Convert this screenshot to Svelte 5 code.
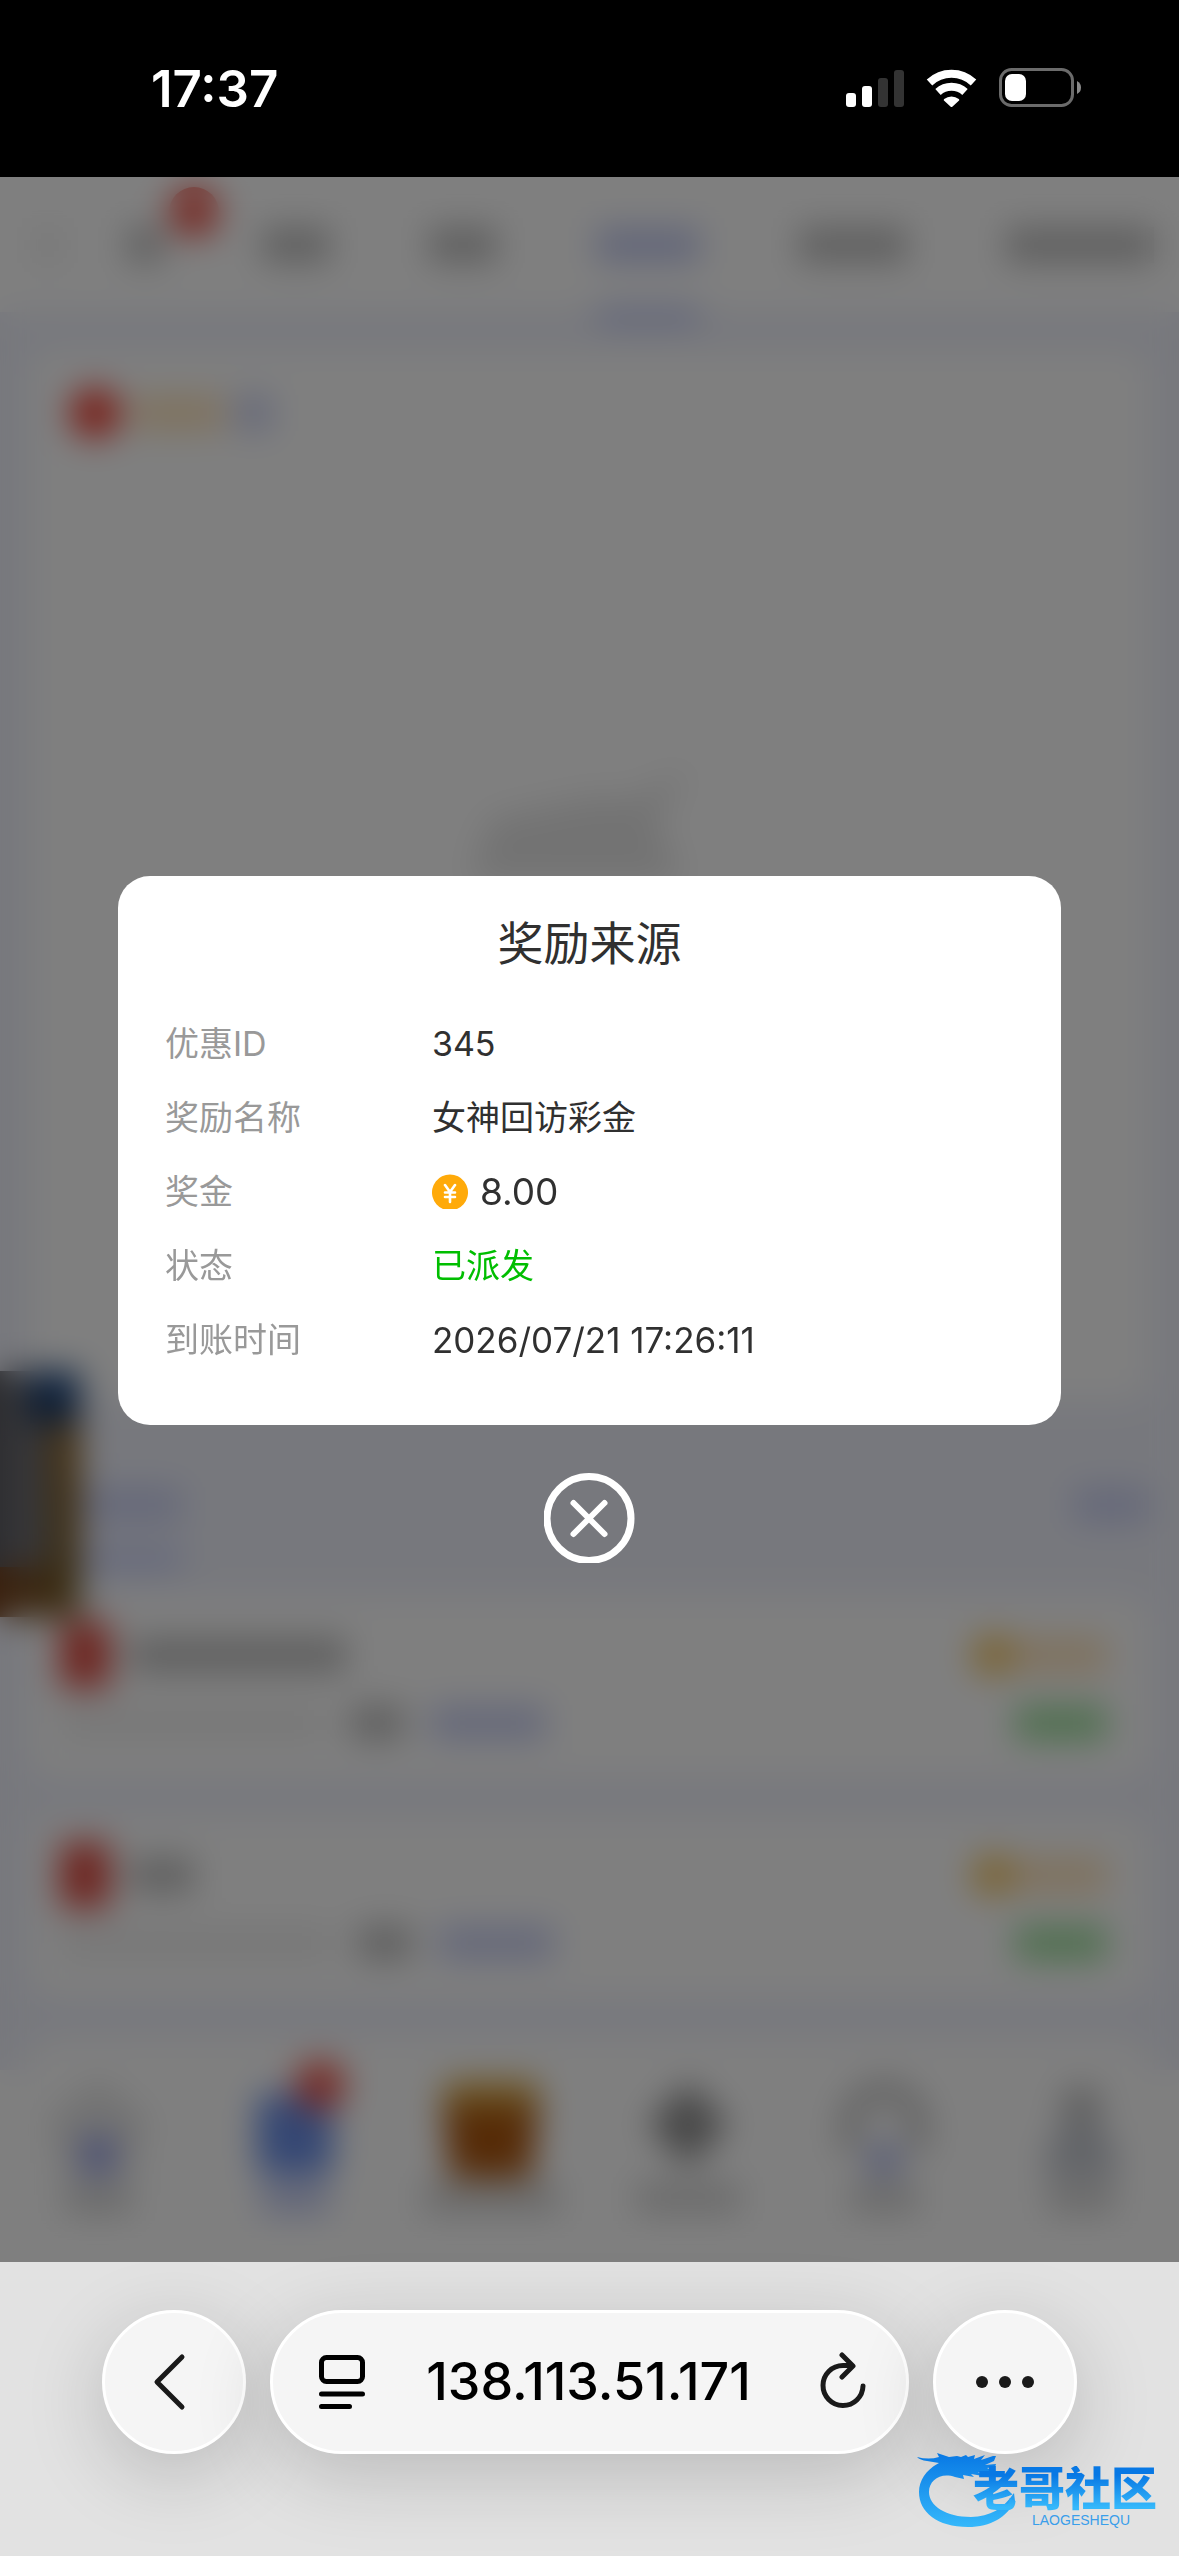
<script lang="ts">
  /**
   * Reward source dialog, shown over the blurred promotions page
   * inside the mobile browser shell.
   */

  interface Detail {
    label: string;
    value: string;
    kind?: 'amount' | 'success' | 'date';
  }

  const details: Detail[] = [
    { label: '优惠ID', value: '345' },
    { label: '奖励名称', value: '女神回访彩金' },
    { label: '奖金', value: '8.00', kind: 'amount' },
    { label: '状态', value: '已派发', kind: 'success' },
    { label: '到账时间', value: '2026/07/21 17:26:11', kind: 'date' }
  ];

  // skeleton widths of the page behind the dialog
  const tabs = [
    { width: 36, badge: true },
    { width: 68 },
    { width: 68 },
    { width: 104, active: true },
    { width: 108 },
    { width: 148 }
  ];

  const records = [
    { title: 216, date: 264 },
    { title: 64, date: 272 }
  ];

  const navItems = [
    { icon: 'home', width: 68 },
    { icon: 'gift', width: 68, active: true, badge: true },
    { icon: 'chest', width: 136 },
    { icon: 'diamond', width: 104 },
    { icon: 'service', width: 68 },
    { icon: 'user', width: 68 }
  ];

  let open = $state(true);
</script>

<div class="phone">
  <header class="status-bar">
    <span class="time">17:37</span>
    <div class="status-icons">
      <svg width="58" height="38" viewBox="0 0 58 38" aria-hidden="true">
        <rect x="0" y="24" width="10" height="14" rx="3" fill="#fff" />
        <rect x="16" y="17" width="10" height="21" rx="3" fill="#fff" />
        <rect x="32" y="9" width="10" height="29" rx="3" fill="#333" />
        <rect x="48" y="1" width="10" height="37" rx="3" fill="#333" />
      </svg>
      <svg width="51" height="38" viewBox="0 0 51 38" fill="none" stroke="#fff" aria-hidden="true">
        <path d="M3.500 13.500a32 32 0 0 1 44 0" stroke-width="8" />
        <path d="M12 23a20 20 0 0 1 27 0" stroke-width="8" />
        <path d="M18.200 30.100a11.500 11.500 0 0 1 14.600 0q.9.800 0 1.700l-6.500 6q-.8.700-1.600 0l-6.500-6q-.9-.9 0-1.700Z" fill="#fff" stroke="none" />
      </svg>
      <svg width="82" height="40" viewBox="0 0 82 40" aria-hidden="true">
        <rect x="1.500" y="1.500" width="72" height="36" rx="11" fill="none" stroke="#6b6b6b" stroke-width="3" />
        <rect x="6" y="6" width="21" height="27" rx="7" fill="#fff" />
        <path d="M78 13v13q4-2 4-6.500t-4-6.500Z" fill="#8a8a8a" />
      </svg>
    </div>
  </header>

  <main class="web">
    <div class="page" aria-hidden={open}>
      <div class="top-tabs">
        <i class="bar faint back"></i>
        {#each tabs as tab}
          <div class="top-tab" class:active={tab.active}>
            <i class="bar" style:width="{tab.width}px"></i>
            {#if tab.badge}<i class="badge"></i>{/if}
          </div>
        {/each}
      </div>

      <div class="content">
        <section class="panel">
          <div class="panel-head">
            <i class="dot"></i>
            <i class="bar gold"></i>
            <i class="bar blue"></i>
          </div>
          <svg class="empty" width="240" height="130" viewBox="0 0 240 130" aria-hidden="true">
            <path d="M20 50 130 28l30 4L220 0l-34 52 26 60H0Z" fill="#e6e6e6" />
          </svg>
        </section>

        <div class="record-tabs">
          <i class="bar blue current"></i>
          <i class="bar blue more"></i>
        </div>

        {#each records as record}
          <article class="record">
            <div class="record-row">
              <i class="packet"></i>
              <i class="bar" style:width="{record.title}px"></i>
              <span class="spacer"></span>
              <i class="coin-dot"></i>
              <i class="bar gold"></i>
            </div>
            <div class="record-row">
              <i class="bar faint" style:width="{record.date}px"></i>
              <i class="bar tag"></i>
              <i class="bar blue source"></i>
              <span class="spacer"></span>
              <i class="bar green"></i>
            </div>
          </article>
        {/each}
        <article class="record"></article>
      </div>

      <div class="nav">
        {#each navItems as item}
          <div class="nav-item">
            <svg width="100" height="108" viewBox="0 0 100 108" aria-hidden="true">
              {#if item.icon === 'home'}
                <path d="M50 16 94 54 84 64v32H16V64L6 54Z" fill="#e8e8e8" stroke="#d8d8d8" stroke-width="8" />
                <rect x="36" y="68" width="28" height="34" fill="#7f8ce8" />
              {:else if item.icon === 'gift'}
                <rect x="12" y="24" width="76" height="80" rx="10" fill="#6a8fe8" />
              {:else if item.icon === 'chest'}
                <rect x="2" y="10" width="96" height="44" rx="8" fill="#d8a846" />
                <path d="M2 36h96l-8 74H10Z" fill="#ac560e" />
              {:else if item.icon === 'diamond'}
                <path d="M50 12 90 54 50 98 10 54Z" fill="#909090" />
              {:else if item.icon === 'service'}
                <path d="M16 82V54a34 34 0 0 1 68 0v28" fill="none" stroke="#bbb" stroke-width="18" />
                <rect x="38" y="76" width="24" height="26" fill="#8a98e8" />
              {:else}
                <circle cx="50" cy="36" r="20" fill="#bcbcbc" />
                <path d="M14 106q0-54 36-54t36 54Z" fill="#c4c8d0" />
              {/if}
            </svg>
            <i class="bar label" class:blue={item.active} style:width="{item.width}px"></i>
            {#if item.badge}<i class="badge"></i>{/if}
          </div>
        {/each}
      </div>

      <div class="floater"></div>
    </div>

    {#if open}
      <div class="overlay">
        <div class="dialog" role="dialog" aria-modal="true" aria-labelledby="dialog-title">
          <h2 id="dialog-title">奖励来源</h2>
          <dl>
            {#each details as detail}
              <div class="detail">
                <dt>{detail.label}</dt>
                <dd class={detail.kind}>
                  {#if detail.kind === 'amount'}
                    <svg width="36" height="36" viewBox="0 0 36 36" aria-hidden="true">
                      <path d="M11 35a18 18 0 1 1 14 0Z" fill="#ffaa0a" />
                      <path
                        d="M13 11l5 7 5-7M18 18v10M13 18.500h10M13 23h10"
                        fill="none"
                        stroke="#fff"
                        stroke-width="2.600"
                        stroke-linecap="round"
                      />
                    </svg>
                  {/if}
                  {detail.value}
                </dd>
              </div>
            {/each}
          </dl>
        </div>
        <button class="close" aria-label="关闭" onclick={() => (open = false)}>
          <svg width="91" height="90" viewBox="0 0 91 90" fill="none" stroke="#fff" aria-hidden="true">
            <circle cx="45" cy="45.500" r="42" stroke-width="7" />
            <path d="M29.500 30 60.500 61M60.500 30 29.500 61" stroke-width="6" stroke-linecap="round" />
          </svg>
        </button>
      </div>
    {/if}
  </main>

  <footer class="browser-bar">
    <button class="glass round" aria-label="返回">
      <svg width="42" height="60" viewBox="0 0 42 60" fill="none" stroke="#1a1a1a" stroke-width="5" stroke-linecap="round" stroke-linejoin="round" aria-hidden="true">
        <path d="M29 5 4 30 29 55" />
      </svg>
    </button>
    <div class="glass address">
      <button class="icon-button" aria-label="页面菜单">
        <svg width="46" height="54" viewBox="0 0 46 54" fill="none" stroke="#000" stroke-width="5" stroke-linecap="round" aria-hidden="true">
          <rect x="2.500" y="2.500" width="41" height="24" rx="5" />
          <path d="M2.500 39h41M2.500 51.500h28" />
        </svg>
      </button>
      <span class="url">138.113.51.171</span>
      <button class="icon-button" aria-label="重新载入">
        <svg width="46" height="60" viewBox="0 0 46 60" fill="none" stroke="#1a1a1a" stroke-width="5" stroke-linecap="round" stroke-linejoin="round" aria-hidden="true">
          <path d="M43 34a20 20 0 1 1-20-20.500h8" />
          <path d="M22 3 33 14 22 25" />
        </svg>
      </button>
    </div>
    <button class="glass round" aria-label="更多">
      <svg width="60" height="14" viewBox="0 0 60 14" fill="#1a1a1a" aria-hidden="true">
        <circle cx="7" cy="7" r="6" />
        <circle cx="30" cy="7" r="6" />
        <circle cx="53" cy="7" r="6" />
      </svg>
    </button>

    <div class="brand">
      <svg width="98" height="78" viewBox="0 0 98 78" aria-hidden="true">
        <defs>
          <linearGradient id="brand-fill" x1="0" y1="0" x2="0" y2="1">
            <stop offset="0" stop-color="#0878e4" />
            <stop offset="1" stop-color="#35b8fb" />
          </linearGradient>
        </defs>
        <path
          fill="url(#brand-fill)"
          d="M0 7q12 3 22 0l-2-4 12 4 8-1 4 1 5-2 2 2 7-2-1 4 11-4-4 5 12-4 3 0-2 5-9 4 11-1-1 3-8 1 6 3-5 2-10-1 5 4-12-2 3 3-11-2 1 4-9-2C24 22 12 30 12 42c0 14 17 25 42 25 19 0 33-9 43-24l1 8c-8 16-24 26-47 26C20 77 2 62 2 42 2 30 10 19 22 13L10 11Q3 10 0 7Z"
        />
      </svg>
      <div class="brand-text">
        <strong>老哥社区</strong>
        <small>LAOGESHEQU</small>
      </div>
    </div>
  </footer>
</div>

<style>
  :global(body) {
    margin: 0;
    background: #000;
  }

  .phone {
    display: flex;
    flex-direction: column;
    height: 100vh;
    font-family: Inter, 'Noto Sans CJK SC', sans-serif;
  }

  button {
    display: flex;
    align-items: center;
    justify-content: center;
    padding: 0;
    border: none;
    background: none;
    cursor: pointer;
  }

  svg {
    display: block;
    flex: none;
  }

  /* Status bar */
  .status-bar {
    display: flex;
    flex: none;
    align-items: center;
    justify-content: space-between;
    box-sizing: border-box;
    height: 177px;
    padding: 0 98px 0 151px;
    background: #000;
    color: #fff;
  }

  .time {
    font-size: 51px;
    font-weight: 600;
    line-height: 60px;
  }

  .status-icons {
    display: flex;
    align-items: center;
    gap: 22px;
    padding-bottom: 2px;
  }

  /* Page behind the dialog */
  .web {
    position: relative;
    flex: 1;
    min-height: 0;
    overflow: hidden;
    background: #eff1fb;
  }

  .page {
    display: flex;
    flex-direction: column;
    height: 100%;
  }

  .bar {
    display: block;
    flex: none;
    height: 36px;
    background: #c0c0c0;
  }

  .bar.faint {
    background: #f0f0f0;
  }

  .bar.blue {
    background: #ccd2f4;
  }

  .bar.gold {
    width: 92px;
    background: #ffe4bc;
  }

  .bar.green {
    width: 92px;
    background: #a0e0a0;
  }

  .badge {
    position: absolute;
    width: 50px;
    height: 50px;
    border-radius: 50%;
    background: #ee5448;
  }

  .top-tabs {
    display: flex;
    flex: none;
    align-items: center;
    gap: 99px;
    height: 135px;
    padding-left: 34px;
    background: #fff;
  }

  .back {
    width: 28px;
    margin-right: -34px;
    background: #dedede;
  }

  .top-tab {
    position: relative;
  }

  .top-tab .badge {
    top: -40px;
    right: -56px;
  }

  .top-tab.active .bar {
    background: #c6cdf2;
  }

  .top-tab.active::after {
    content: '';
    position: absolute;
    top: 82px;
    left: 0;
    width: 100%;
    height: 12px;
    background: #a4b0f0;
  }

  .content {
    display: flex;
    flex: 1;
    flex-direction: column;
    min-height: 0;
    padding: 38px 30px 0;
    overflow: hidden;
  }

  .panel {
    flex: none;
    box-sizing: border-box;
    height: 1050px;
    padding: 38px 40px;
    border-radius: 24px;
    background: #fff;
  }

  .panel-head {
    display: flex;
    align-items: center;
    gap: 12px;
  }

  .panel-head .blue {
    width: 36px;
  }

  .dot {
    width: 50px;
    height: 50px;
    border-radius: 50%;
    background: #f0382a;
  }

  .empty {
    margin: 330px auto 0;
  }

  .record-tabs {
    display: flex;
    flex: none;
    align-items: center;
    justify-content: space-between;
    height: 197px;
  }

  .current {
    position: relative;
    width: 152px;
  }

  .current::after {
    content: '';
    position: absolute;
    top: 66px;
    left: 0;
    width: 100%;
    height: 12px;
    background: #aab6f6;
  }

  .more {
    width: 76px;
  }

  .record-tabs .bar {
    margin-bottom: -12px;
  }

  .record {
    flex: none;
    box-sizing: border-box;
    height: 180px;
    margin-bottom: 40px;
    padding: 24px 42px 0 30px;
    border-radius: 24px;
    background: #fff;
  }

  .record-row {
    display: flex;
    align-items: center;
    height: 68px;
  }

  .record-row .tag {
    width: 54px;
    margin: 0 26px;
  }

  .record-row .source {
    width: 116px;
  }

  .spacer {
    flex: 1;
  }

  .packet {
    width: 50px;
    height: 66px;
    margin-right: 20px;
    border-radius: 6px;
    background: #dc4a40;
  }

  .coin-dot {
    width: 44px;
    height: 44px;
    border-radius: 50%;
    background: #f6c866;
  }

  .nav {
    display: flex;
    flex: none;
    height: 192px;
    background: #fff;
  }

  .nav-item {
    position: relative;
    display: flex;
    flex: 1;
    flex-direction: column;
    align-items: center;
  }

  .nav-item .label {
    height: 32px;
    margin-top: 4px;
    background: #d6d6d6;
  }

  .nav-item .label.blue {
    background: #c4ccf2;
  }

  .nav-item .badge {
    top: -10px;
    left: 98px;
  }

  .floater {
    position: absolute;
    top: 1194px;
    left: 0;
    width: 80px;
    height: 246px;
    background:
      linear-gradient(#1c4a88, #14325c) 100% 0 / 50px 52px no-repeat,
      linear-gradient(#8c6020, #6c5420) 100% 100% / 30px 194px no-repeat,
      linear-gradient(90deg, #74401c, #80642c) 0 100% / 100% 50px no-repeat,
      linear-gradient(90deg, #5c5c62, #8c8c90);
  }

  /* Dialog */
  .overlay {
    position: absolute;
    inset: 0;
    display: flex;
    flex-direction: column;
    align-items: center;
    justify-content: center;
    gap: 48px;
    background: rgba(0, 0, 0, 0.5);
    backdrop-filter: blur(17px);
  }

  .dialog {
    box-sizing: border-box;
    width: 80%;
    padding: 35px 47px 48px;
    border-radius: 32px;
    background: #fff;
    color: #303030;
  }

  h2 {
    margin: 0 0 32px;
    font-size: 46px;
    font-weight: 400;
    line-height: 64px;
    text-align: center;
  }

  dl {
    margin: 0;
  }

  .detail {
    display: flex;
    align-items: center;
    height: 74px;
    font-size: 34px;
    line-height: 48px;
  }

  dt {
    width: 267px;
    color: #999;
  }

  dd {
    display: flex;
    align-items: center;
    gap: 12px;
    margin: 0;
  }

  dd.amount {
    font-size: 37px;
  }

  dd.date {
    font-size: 35px;
  }

  dd.success {
    color: #00be00;
  }

  /* Browser toolbar */
  .browser-bar {
    position: relative;
    display: flex;
    flex: none;
    align-items: flex-start;
    gap: 24px;
    box-sizing: border-box;
    height: 294px;
    padding: 48px 102px 0;
    background: #e2e2e2;
  }

  .glass {
    box-sizing: border-box;
    height: 144px;
    border: 3px solid #fff;
    border-radius: 72px;
    background: #f5f5f5;
    box-shadow: 0 20px 80px rgba(0, 0, 0, 0.18);
  }

  .round {
    flex: none;
    width: 144px;
  }

  .address {
    display: flex;
    flex: 1;
    align-items: center;
    justify-content: space-between;
    padding: 0 40px 0 46px;
  }

  .url {
    padding-right: 8px;
    color: #000;
    font-size: 52px;
    font-weight: 500;
    line-height: 60px;
  }

  .brand {
    position: absolute;
    right: 22px;
    bottom: 28px;
    display: flex;
    align-items: flex-end;
  }

  .brand-text {
    display: flex;
    flex-direction: column;
    align-items: center;
    margin-left: -42px;
  }

  .brand strong {
    background: linear-gradient(#0878e4 20%, #35b8fb 90%);
    background-clip: text;
    color: transparent;
    font-family: 'Liberation Sans', 'Noto Sans CJK SC', sans-serif;
    font-size: 46px;
    font-weight: 900;
    line-height: 46px;
  }

  .brand small {
    padding-left: 32px;
    color: #3a9eea;
    font-family: 'Liberation Sans', sans-serif;
    font-size: 14px;
    line-height: 16px;
  }
</style>
